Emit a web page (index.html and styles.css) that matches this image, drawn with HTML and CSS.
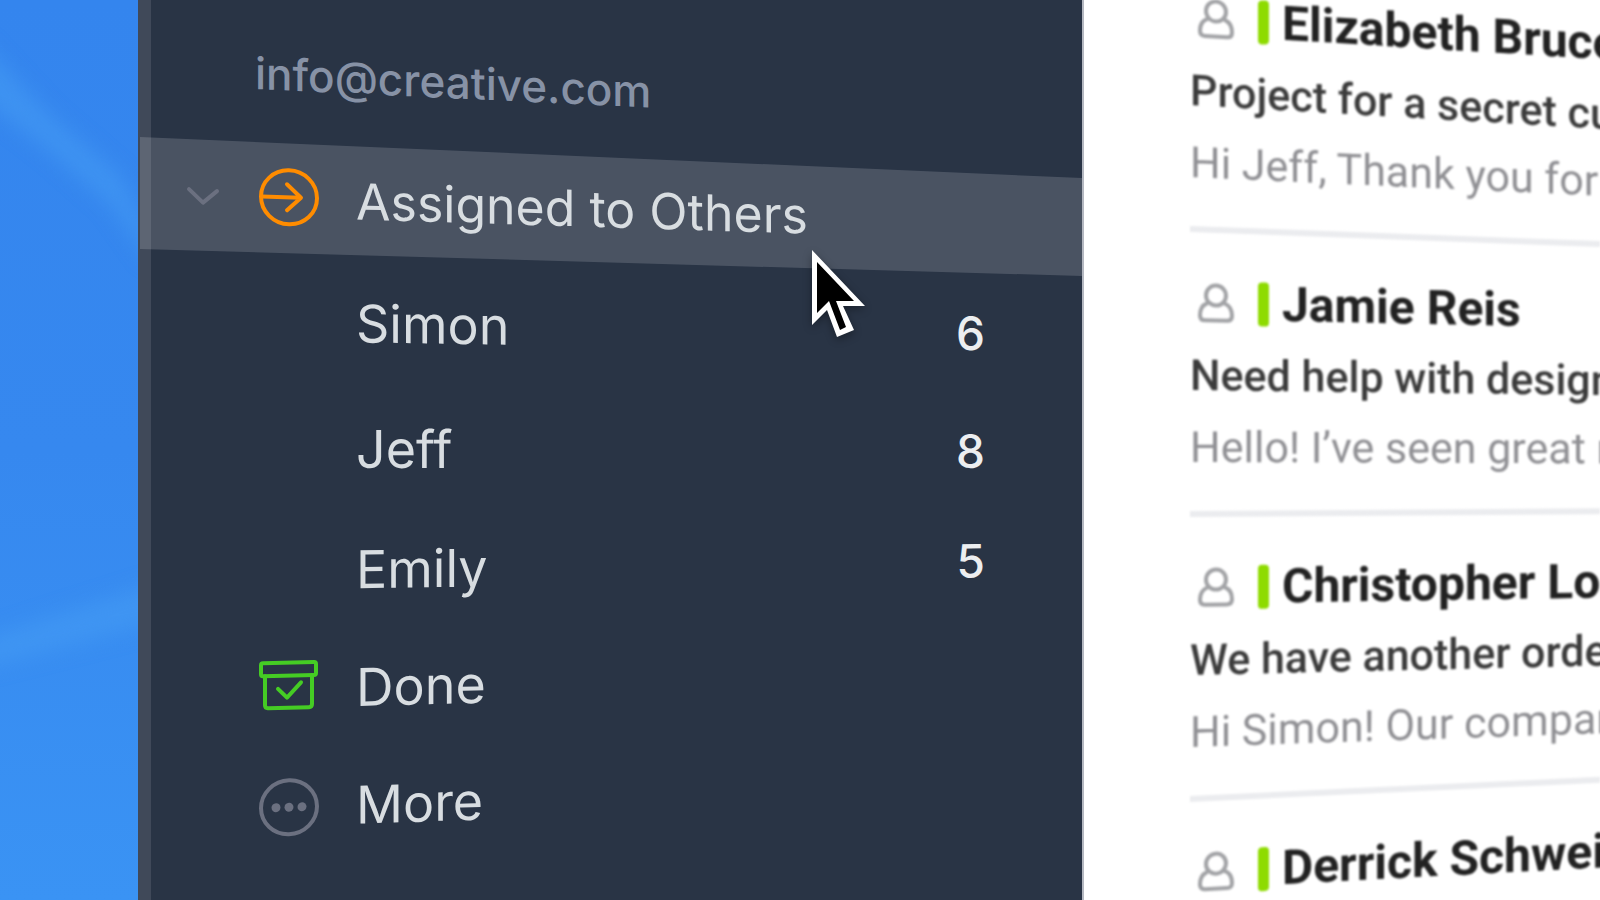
FILE: index.html
```html
<!DOCTYPE html>
<html lang="en">
<head>
  <meta charset="UTF-8" />
  <meta name="viewport" content="width=device-width, initial-scale=1.0"/>
  <title>Mail</title>
  <link rel="stylesheet" href="styles.css">
</head>
<body>
  <div class="app">
    <div class="desktop">
      <svg class="beams" viewBox="0 0 138 900" preserveAspectRatio="none" aria-hidden="true">
        <path d="M-20 40 L50 115 L120 175 L160 250 L150 262 L110 205 L50 152 L-20 98 Z"/>
        <path d="M-20 640 L60 614 L160 582 L160 622 L60 648 L-20 668 Z"/>
      </svg>
    </div>

    <nav class="sidebar">
      <p class="account tilt">info@creative.com</p>
      <ul class="folders">
        <li class="folder active">
          <a href="#" class="folder-link tilt">
            <svg class="chevron" viewBox="0 0 32 18"><path d="M2 2 L16 15 L30 3"/></svg>
            <svg class="icon assigned" viewBox="0 0 60 60">
              <ellipse cx="31" cy="28" rx="28" ry="27"/>
              <path d="M4 28 H42 M29 15 L43 28 L29 41"/>
            </svg>
            <span class="label">Assigned to Others</span>
          </a>
        </li>
        <li class="folder person">
          <a href="#" class="folder-link tilt"><span class="label">Simon</span><span class="count">6</span></a>
        </li>
        <li class="folder person">
          <a href="#" class="folder-link tilt"><span class="label">Jeff</span><span class="count">8</span></a>
        </li>
        <li class="folder">
          <a href="#" class="folder-link tilt"><span class="label">Emily</span><span class="count">5</span></a>
        </li>
        <li class="folder">
          <a href="#" class="folder-link tilt">
            <svg class="icon done" viewBox="0 0 60 60">
              <rect x="3" y="4" width="55" height="13" rx="2"/>
              <path d="M7 17 V46 Q7 49 10 49 H51 Q54 49 54 46 V17 M20 30 L29 39 L43 24"/>
            </svg>
            <span class="label">Done</span>
          </a>
        </li>
        <li class="folder">
          <a href="#" class="folder-link tilt">
            <svg class="icon more" viewBox="0 0 60 60">
              <ellipse cx="31" cy="30" rx="28" ry="27"/>
              <circle class="dot" cx="18" cy="30" r="4.5"/>
              <circle class="dot" cx="31" cy="30" r="4.5"/>
              <circle class="dot" cx="44" cy="30" r="4.5"/>
            </svg>
            <span class="label">More</span>
          </a>
        </li>
      </ul>

      <svg class="cursor" viewBox="0 0 60 94" aria-hidden="true">
        <path fill="#fff" d="M0 0 V75 L15 60 L25 87 L42 80 L31 56 H53 Z"/>
        <path fill="#000" d="M5 12 V63 L17 51 L28 80 L34 77 L24 51 H42 Z"/>
      </svg>
    </nav>

    <main class="messages">
      <article class="message">
        <h2 class="sender tilt">
          <svg class="avatar" viewBox="0 0 36 40"><circle cx="18" cy="12" r="10"/><path d="M9 20 C4 22 2 26 2 32 Q2 37 7 37 H29 Q34 37 34 32 C34 26 32 22 27 20"/></svg>
          <span class="flag"></span>Elizabeth Bruce
        </h2>
        <p class="subject tilt">Project for a secret cu</p>
        <p class="preview tilt">Hi Jeff, Thank you for s</p>
        <hr class="tilt">
      </article>
      <article class="message">
        <h2 class="sender tilt">
          <svg class="avatar" viewBox="0 0 36 40"><circle cx="18" cy="12" r="10"/><path d="M9 20 C4 22 2 26 2 32 Q2 37 7 37 H29 Q34 37 34 32 C34 26 32 22 27 20"/></svg>
          <span class="flag"></span>Jamie Reis
        </h2>
        <p class="subject tilt">Need help with design</p>
        <p class="preview tilt">Hello! I’ve seen great r</p>
        <hr class="tilt">
      </article>
      <article class="message">
        <h2 class="sender tilt">
          <svg class="avatar" viewBox="0 0 36 40"><circle cx="18" cy="12" r="10"/><path d="M9 20 C4 22 2 26 2 32 Q2 37 7 37 H29 Q34 37 34 32 C34 26 32 22 27 20"/></svg>
          <span class="flag"></span>Christopher Lo
        </h2>
        <p class="subject tilt">We have another orde</p>
        <p class="preview tilt">Hi Simon! Our compan</p>
        <hr class="tilt">
      </article>
      <article class="message">
        <h2 class="sender tilt">
          <svg class="avatar" viewBox="0 0 36 40"><circle cx="18" cy="12" r="10"/><path d="M9 20 C4 22 2 26 2 32 Q2 37 7 37 H29 Q34 37 34 32 C34 26 32 22 27 20"/></svg>
          <span class="flag"></span>Derrick Schwei
        </h2>
      </article>
    </main>
  </div>
</body>
</html>
```
FILE: styles.css
```css
* { box-sizing: border-box; }
body { margin: 0; font-family: Inter, "Liberation Sans", sans-serif; overflow: hidden; }
ul { list-style: none; margin: 0; padding: 0; }
a { color: inherit; text-decoration: none; }
svg { flex: none; fill: none; stroke-linecap: round; stroke-linejoin: round; overflow: visible; }

.app {
  display: grid; grid-template-columns: 138fr 944fr 518fr;
  height: 100vh; overflow: hidden;
}
.app > * { min-width: 0; }

/* rows fan out from the middle of the window */
.tilt { transform: skewY(var(--tilt, 0deg)); transform-origin: left center; }

.desktop { background: linear-gradient(#3485ee, #3688ef 50%, #3a93f4); overflow: hidden; }
.beams { display: block; width: 100%; height: 100%; filter: blur(10px); }
.beams path { fill: #459bf4; opacity: 0.6; }

.sidebar {
  position: relative; background: #293445; color: #d8dde1;
  border-left: 13px solid #404959;
}
.account {
  --tilt: 2.7deg;
  display: flex; align-items: center; height: 134px; margin: 0; padding: 2px 0 0 104px;
  font-size: 44px; font-weight: 500; color: #8792a6;
}
.folder { position: relative; height: 120px; }
.folder.active { --tilt: 1.8deg; height: 122px; }
.folder.active::before {
  content: ""; position: absolute; inset: 0 0 -20px -11px;
  background: rgba(248, 250, 255, 0.16);
  clip-path: polygon(0 3px, 100% 44px, 100% 142px, 0 115px);
}
.folder.person { height: 128px; }
.folder:nth-child(2) { --tilt: 0.9deg; }
.folder:nth-child(3) { --tilt: 0.2deg; }
.folder:nth-child(4) { --tilt: -0.8deg; }
.folder:nth-child(5) { --tilt: -1.4deg; }
.folder:nth-child(6) { --tilt: -2deg; }
.folder-link {
  position: relative; height: 100%; padding: 0 97px 0 36px;
  display: grid; grid-template-columns: 71px 60px 1fr auto; align-items: center;
}
.chevron { width: 32px; height: 18px; stroke: #6b7080; stroke-width: 4; }
.icon { grid-column: 2; width: 60px; height: 60px; stroke-width: 4; }
.label { grid-column: 3; padding-left: 38px; font-size: 52px; white-space: nowrap; }
.active .label { font-size: 50px; }
.count { font-size: 46px; font-weight: 500; color: #eceef0; }
.assigned { stroke: #ff8c00; }
.done { stroke: #45cc24; }
.more { stroke: #6b7080; }
.dot { fill: #6b7080; stroke: none; }
.cursor {
  position: absolute; top: 250px; left: 661px; width: 60px; height: 94px;
  filter: drop-shadow(0 3px 4px rgba(0, 0, 0, 0.35));
}

.messages {
  background: #fff; overflow: hidden; padding-left: 106px;
  border-left: 2px solid #b4b8c1; font-family: Roboto, sans-serif;
}
.message { height: 285px; padding-top: 39px; filter: blur(1px); white-space: nowrap; }
.message:first-child { margin-top: -57px; }
.message > * { height: 72px; line-height: 72px; margin: 0; }
.sender {
  display: flex; align-items: center; padding-left: 8px;
  font-size: 48px; font-weight: 700; color: #222;
}
.avatar { width: 36px; height: 40px; stroke: #a2a3a6; stroke-width: 4; }
.flag { flex: none; width: 11px; height: 44px; margin: 0 13px 0 24px; border-radius: 4px; background: #8edb00; }
.subject { font-size: 43px; font-weight: 500; color: #3c3c3c; }
.preview { font-size: 43px; color: #909094; }
.message > hr { height: 6px; margin-top: 28px; border: 0; background: #ebecef; }

.message:nth-child(1) .sender { --tilt: 3.5deg; }
.message:nth-child(1) .subject { --tilt: 3.3deg; }
.message:nth-child(1) .preview { --tilt: 2.6deg; }
.message:nth-child(1) hr { --tilt: 2.1deg; }
.message:nth-child(2) .sender { --tilt: 1.2deg; }
.message:nth-child(2) .subject { --tilt: 0.7deg; }
.message:nth-child(2) .preview { --tilt: 0.2deg; }
.message:nth-child(2) hr { --tilt: -0.4deg; }
.message:nth-child(3) .sender { --tilt: -0.9deg; }
.message:nth-child(3) .subject { --tilt: -1.3deg; }
.message:nth-child(3) .preview { --tilt: -1.9deg; }
.message:nth-child(3) hr { --tilt: -2.7deg; }
.message:nth-child(4) .sender { --tilt: -3deg; }
```
